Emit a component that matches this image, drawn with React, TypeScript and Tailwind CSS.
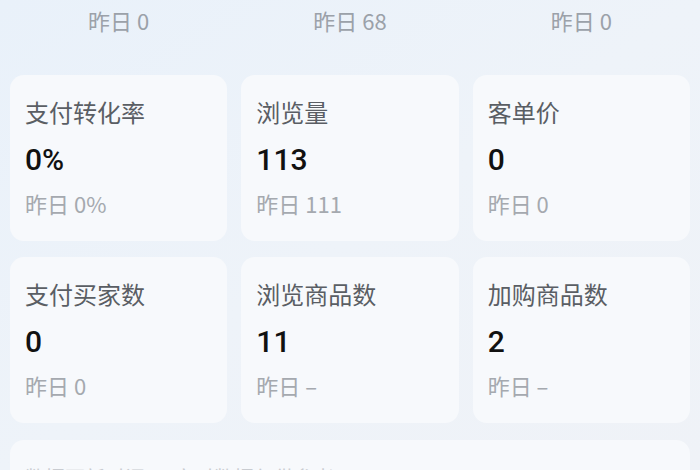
import React from 'react';

const yesterdayTop = ['昨日 0', '昨日 68', '昨日 0'];

const stats = [
  { label: '支付转化率', value: '0%', prev: '昨日 0%' },
  { label: '浏览量', value: '113', prev: '昨日 111' },
  { label: '客单价', value: '0', prev: '昨日 0' },
  { label: '支付买家数', value: '0', prev: '昨日 0' },
  { label: '浏览商品数', value: '11', prev: '昨日 –' },
  { label: '加购商品数', value: '2', prev: '昨日 –' },
];

function StatCard({ label, value, prev }: { label: string; value: string; prev: string }) {
  return (
    <div className="h-[166px] rounded-[14px] bg-[#f7f9fc] px-[15px] pt-[22px]">
      <div className="text-[24px] leading-[30px] text-[#5a5e64]">{label}</div>
      <div className="mt-[15px] text-[30px] font-medium leading-[36px] text-[#111]" style={{ fontFamily: 'Roboto, "Noto Sans CJK SC", sans-serif' }}>
        {value}
      </div>
      <div className="mt-[10px] text-[22px] leading-[30px] text-[#a5a9af]">{prev}</div>
    </div>
  );
}

export default function App() {
  return (
    <div
      className="h-[470px] w-[700px] overflow-hidden bg-gradient-to-br from-[#e9f1fa] via-[#eef3f9] to-[#eff2f7] px-[10px]"
      style={{ fontFamily: '"Noto Sans CJK SC", "Noto Sans", sans-serif' }}
    >
      <div className="grid h-[75px] grid-cols-3 gap-x-[14px] pt-[6px]">
        {yesterdayTop.map((t, i) => (
          <div key={i} className="text-center text-[22px] leading-[28px] text-[#9ba1a9]">
            {t}
          </div>
        ))}
      </div>
      <div className="grid grid-cols-3 gap-x-[14px] gap-y-[16px]">
        {stats.map((s) => (
          <StatCard key={s.label} {...s} />
        ))}
      </div>
      <div className="mt-[17px] h-[120px] rounded-[14px] bg-[#f7f9fc] px-[15px] pt-[24px]">
        <div className="text-[20px] leading-[28px] text-[#c9ccd1]">数据更新时间 · 实时数据仅供参考</div>
      </div>
    </div>
  );
}
